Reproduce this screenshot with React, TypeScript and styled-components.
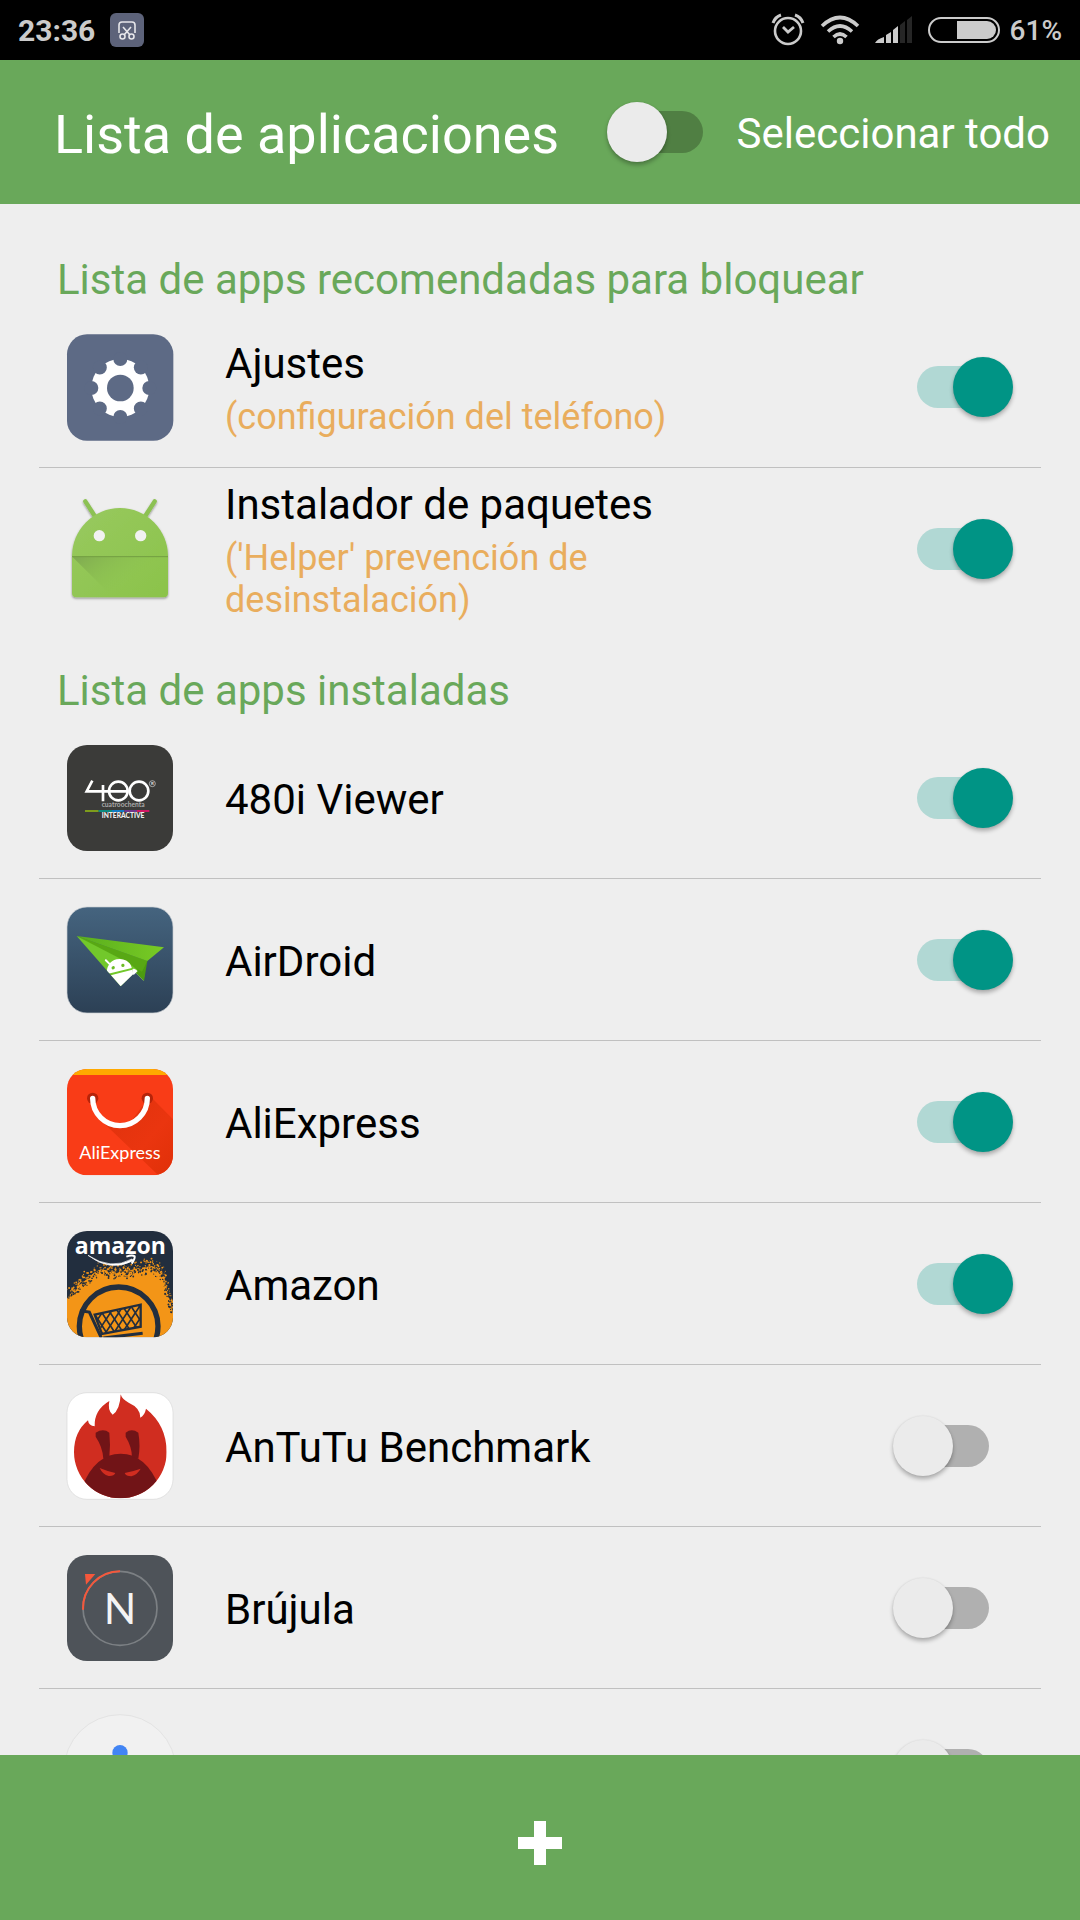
import React, { useState } from 'react';
import styled, { createGlobalStyle } from 'styled-components';

const GlobalStyle = createGlobalStyle`
  * { box-sizing: border-box; }
  body {
    margin: 0;
    background: #eeeeee;
    font-family: Roboto, "Liberation Sans", sans-serif;
    color: #000;
  }
`;

const Screen = styled.div`
  display: flex;
  flex-direction: column;
  height: 100vh;
  overflow: hidden;
`;

const StatusBar = styled.div`
  display: flex;
  align-items: center;
  flex: none;
  height: 60px;
  padding: 0 18px;
  background: #000;
  color: #cbcbcb;
`;

const Clock = styled.time`
  margin-right: 15px;
  font-size: 30px;
  font-weight: 700;
`;

const StatusIcons = styled.div`
  display: flex;
  align-items: center;
  gap: 15px;
  margin-left: auto;
`;

const Battery = styled.div`
  display: flex;
  align-items: center;
  gap: 10px;
  font-size: 28px;
  font-weight: 500;
`;

const Header = styled.header`
  display: flex;
  align-items: center;
  justify-content: space-between;
  flex: none;
  height: 144px;
  padding: 0 30px 0 54px;
  background: #69a85a;
  color: #fff;
`;

const Title = styled.h1`
  margin: 0;
  padding-top: 6px;
  font-size: 54px;
  line-height: 64px;
  font-weight: 400;
`;

const SelectAll = styled.div`
  display: flex;
  align-items: center;
  gap: 10px;
`;

const SelectAllLabel = styled.label`
  padding-top: 4px;
  font-size: 42px;
  line-height: 48px;
  cursor: pointer;
`;

const Switch = styled.input<{ $track?: string }>`
  appearance: none;
  display: grid;
  align-items: center;
  flex: none;
  width: 120px;
  height: 60px;
  margin: 0;
  cursor: pointer;

  &::before,
  &::after {
    content: '';
    grid-area: 1 / 1;
  }
  &::before {
    justify-self: center;
    width: 72px;
    height: 42px;
    border-radius: 21px;
    background: ${(p) => p.$track ?? '#b0b0b0'};
  }
  &::after {
    justify-self: start;
    width: 60px;
    height: 60px;
    border-radius: 50%;
    background: #ebebeb;
    box-shadow: 0 3px 4px rgba(0, 0, 0, 0.28), 0 0 2px rgba(0, 0, 0, 0.08);
  }
  &:checked::before {
    background: #b1d8d4;
  }
  &:checked::after {
    justify-self: end;
    background: #009485;
  }
`;

const Content = styled.main`
  flex: 1;
  min-height: 0;
  padding: 15px 39px 0;
  overflow-y: auto;
  scrollbar-width: none;
`;

const SectionTitle = styled.h2`
  margin: 0;
  padding: 37px 18px 2px;
  font-size: 42px;
  line-height: 48px;
  font-weight: 400;
  color: #69a85a;
`;

const List = styled.ul`
  margin: 0;
  padding: 0;
  list-style: none;
`;

const Row = styled.li`
  display: flex;
  align-items: center;
  height: 162px;
  padding: 0 28px 0 27px;
  border-bottom: 1px solid #c0c0c0;

  &:last-child {
    border-bottom-color: transparent;
  }
`;

const AppIcon = styled.svg`
  flex: none;
  width: 108px;
  height: 108px;
  overflow: visible;
`;

const RowLabel = styled.label`
  flex: 1;
  padding: 4px 180px 0 51px;
  cursor: pointer;
`;

const Name = styled.span`
  display: block;
  font-size: 42px;
  line-height: 50px;
`;

const Note = styled.span`
  display: block;
  padding-top: 7px;
  font-size: 36px;
  line-height: 42px;
  color: #e9ad5d;
`;

const AddButton = styled.button`
  display: flex;
  align-items: center;
  justify-content: center;
  flex: none;
  height: 165px;
  padding: 10px 0 0;
  border: 0;
  background: #69a85a;
  cursor: pointer;
`;

const SettingsIcon = () => (
  <AppIcon viewBox="78 67 324 324" aria-hidden="true">
    <rect x="81" y="71" width="319" height="319" rx="60" fill="#5d6a85" />
    <circle cx="241" cy="232" r="87" fill="#fff" />
    {[0, 45, 90, 135, 180, 225, 270, 315].map((a) => (
      <circle key={a} cx="241" cy="145" r="21" fill="#5d6a85" transform={`rotate(${a} 241 232)`} />
    ))}
    <circle cx="241" cy="232" r="40" fill="#5d6a85" />
  </AppIcon>
);

const InstallerIcon = () => (
  <AppIcon viewBox="78 554 324 324" aria-hidden="true">
    <defs>
      <linearGradient id="droid" x1="0" y1="0" x2="1" y2="1">
        <stop offset="0" stopColor="#98c95f" />
        <stop offset="1" stopColor="#8bc34a" />
      </linearGradient>
      <linearGradient id="droidShade" x1="0" y1="0" x2="1" y2="0.6">
        <stop offset="0" stopColor="#7ea851" />
        <stop offset="0.7" stopColor="#8bc34a" stopOpacity="0" />
      </linearGradient>
      <filter id="droidDrop" x="-10%" y="-10%" width="120%" height="125%">
        <feDropShadow dx="0" dy="4" stdDeviation="3" floodOpacity="0.4" />
      </filter>
    </defs>
    <g filter="url(#droidDrop)">
      <path d="M136 573l32 50M344 573l-32 50" stroke="#8cc152" strokeWidth="13" strokeLinecap="round" />
      <path d="M96 738a144 145 0 0 1 288 0v110q0 13-13 13H109q-13 0-13-13z" fill="url(#droid)" />
    </g>
    <path d="M97 739H383V848q0 13-13 13H220z" fill="url(#droidShade)" />
    <path d="M96 739H384" stroke="#729e42" strokeWidth="3" />
    <circle cx="178" cy="676" r="17" fill="#f1f1f1" />
    <circle cx="302" cy="676" r="17" fill="#f1f1f1" />
  </AppIcon>
);

const ViewerIcon = () => (
  <AppIcon viewBox="48 41 324 324" aria-hidden="true">
    <rect x="51" y="44" width="318" height="318" rx="60" fill="#3b3b39" />
    <g fill="none" stroke="#fff" strokeWidth="8">
      <path d="M127 151L110 183H232M159 164V213" />
      <circle cx="205" cy="182" r="28" />
      <circle cx="267" cy="182" r="28" />
    </g>
    <circle cx="307" cy="160" r="9" fill="none" stroke="#ddd" strokeWidth="2" />
    <text x="307" y="165" textAnchor="middle" fontSize="13" fontWeight="700" fill="#ddd">R</text>
    <text x="155" y="231" fontFamily="Lato, sans-serif" fontSize="20" fontWeight="700" fill="#aaa">cuatroochenta</text>
    <path d="M105 242H146" stroke="#7e9c1c" strokeWidth="6" />
    <path d="M146 242H186" stroke="#0c8a80" strokeWidth="6" />
    <path d="M186 242H223" stroke="#117cc4" strokeWidth="6" />
    <path d="M223 242H261" stroke="#70368c" strokeWidth="6" />
    <path d="M261 242H298" stroke="#d11763" strokeWidth="6" />
    <text x="155" y="262" fontFamily="Lato, sans-serif" fontSize="20" fontWeight="900" fill="#eee">INTERACTIVE</text>
  </AppIcon>
);

const AirDroidIcon = () => (
  <AppIcon viewBox="48 47 324 324" aria-hidden="true">
    <defs>
      <linearGradient id="airBg" x1="0" y1="0" x2="0" y2="1">
        <stop offset="0" stopColor="#45647f" />
        <stop offset="1" stopColor="#2c4055" />
      </linearGradient>
      <linearGradient id="airWing" x1="0" y1="0" x2="1" y2="0">
        <stop offset="0" stopColor="#58ad1d" />
        <stop offset="1" stopColor="#79cb25" />
      </linearGradient>
      <clipPath id="airPaper">
        <path d="M80 137L212 288L268 234L246 200L200 180z" />
      </clipPath>
    </defs>
    <rect x="51" y="50" width="318" height="318" rx="60" fill="url(#airBg)" stroke="#c9cdd1" strokeWidth="2" />
    <path d="M246 236l35 36 3-30-24-10z" fill="#a9b5c4" />
    <path d="M80 137L292 212L282 272L246 236L140 172z" fill="#4c9b10" />
    <path d="M80 137L292 212L276 244L180 192z" fill="#58a814" />
    <path d="M80 137L212 288L262 238L236 218z" fill="#72c82b" />
    <g clipPath="url(#airPaper)">
      <g transform="rotate(-14 208 240)">
        <path d="M170 242a38 36 0 0 1 76 0z" fill="#fff" />
        <path d="M184 214l-8-13" stroke="#fff" strokeWidth="6" strokeLinecap="round" />
        <circle cx="192" cy="228" r="5" fill="#6cbc25" />
        <circle cx="222" cy="228" r="5" fill="#6cbc25" />
        <path d="M168 248h78v60h-78z" fill="#fff" />
      </g>
    </g>
    <path d="M247 238q3-6 11 0l5 4-12 12q-5-6-4-16z" fill="#fff" />
    <path d="M80 137L342 171L292 212z" fill="url(#airWing)" />
  </AppIcon>
);

const AliExpressIcon = () => (
  <AppIcon viewBox="48 53 324 324" aria-hidden="true">
    <defs>
      <clipPath id="aliClip">
        <rect x="51" y="56" width="318" height="319" rx="60" />
      </clipPath>
      <linearGradient id="aliShade" x1="0" y1="0" x2="1" y2="1">
        <stop offset="0.2" stopColor="#e2330e" />
        <stop offset="0.6" stopColor="#ea350f" />
        <stop offset="1" stopColor="#e03008" />
      </linearGradient>
    </defs>
    <g clipPath="url(#aliClip)">
      <path d="M51 56H369V375H51z" fill="#f93c17" />
      <path d="M300 137L369 207V375H325L165 222L230 230z" fill="url(#aliShade)" />
      <path d="M51 56H369V74H51z" fill="#ffa900" />
    </g>
    <circle cx="128" cy="144" r="17" fill="#b6240a" />
    <circle cx="292" cy="144" r="17" fill="#b6240a" />
    <path d="M128 144a82 82 0 0 0 164 0" fill="none" stroke="#fff" strokeWidth="16" strokeLinecap="round" />
    <text x="210" y="327" textAnchor="middle" fontFamily="Lato, sans-serif" fontSize="54" fill="#fff">AliExpress</text>
  </AppIcon>
);

const sprayEdge: Array<[number, number]> = [
  [51, 250], [72, 222], [92, 206], [112, 190], [132, 172], [152, 162], [178, 166], [204, 170],
  [230, 168], [256, 160], [282, 156], [306, 152], [326, 162], [342, 180], [346, 204], [354, 232], [362, 262], [369, 290],
];

const noise = (n: number) => {
  const v = Math.sin(n * 127.1 + 11.7) * 43758.5453;
  return v - Math.floor(v);
};

const sprayDots = Array.from({ length: 460 }, (_, i) => {
  const t = noise(i * 5 + 1) * (sprayEdge.length - 1.01);
  const k = Math.floor(t);
  const f = t - k;
  const [ax, ay] = sprayEdge[k];
  const [bx, by] = sprayEdge[k + 1];
  const spread = noise(i * 5 + 2) + noise(i * 5 + 3) - 1;
  return {
    x: ax + (bx - ax) * f + noise(i * 5 + 4) * 12 - 6,
    y: ay + (by - ay) * f + spread * 26,
    r: 1 + noise(i * 5 + 5) * 2,
    dark: spread > 0,
  };
});

const AmazonIcon = () => (
  <AppIcon viewBox="48 44 324 324" aria-hidden="true">
    <defs>
      <clipPath id="amzClip">
        <rect x="51" y="47" width="318" height="319" rx="60" />
      </clipPath>
      <clipPath id="basketClip">
        <path d="M134 298L272 268V334L160 354z" />
      </clipPath>
    </defs>
    <g clipPath="url(#amzClip)">
      <path d="M51 47H369V366H51z" fill="#222e3e" />
      <path d={`M51 366L${sprayEdge.map((p) => p.join(' ')).join('L')}V366z`} fill="#f39517" />
      {sprayDots.map((d, i) => (
        <circle key={i} cx={d.x} cy={d.y} r={d.r} fill={d.dark ? '#222e3e' : '#f39517'} />
      ))}
      <g fill="none" stroke="#222e3e">
        <circle cx="206" cy="333" r="118" strokeWidth="16" />
        <path d="M90 286l28 4 36 78" strokeWidth="9" />
        <path d="M134 298L272 268V334L156 356z" strokeWidth="7" />
        <path d="M160 368L278 354" strokeWidth="9" />
        <g clipPath="url(#basketClip)" strokeWidth="5">
          {[0, 1, 2, 3, 4, 5, 6, 7, 8].map((n) => (
            <path key={n} d={`M${86 + n * 25} 262l72 110M${126 + n * 25} 262l-72 110`} />
          ))}
        </g>
      </g>
    </g>
    <text x="211" y="115" textAnchor="middle" fontFamily="'Open Sans', sans-serif" fontSize="69" fontWeight="700" fill="#fff">amazon</text>
    <path d="M114 120Q182 166 246 131L250 136Q180 172 114 120z" fill="#fff" stroke="#fff" strokeWidth="2" />
    <path d="M229 124q18-6 25-1 1 8-9 22" fill="none" stroke="#fff" strokeWidth="6" />
  </AppIcon>
);

const AntutuIcon = () => (
  <AppIcon viewBox="48 50 324 324" aria-hidden="true">
    <defs>
      <clipPath id="flame">
        <path d="M212 57Q216 72 236 82Q272 98 271 127Q284 120 288 100Q350 150 350 230A139 139 0 0 1 72 230Q72 170 114 135Q116 152 134 153Q132 104 178 77Q172 106 188 118Q210 104 212 57z" />
      </clipPath>
    </defs>
    <rect x="51" y="52" width="318" height="320" rx="60" fill="#fff" stroke="#d8d8d8" strokeWidth="2" />
    <g clipPath="url(#flame)">
      <path d="M60 50H360V380H60z" fill="#d02d20" />
      <path d="M96 335Q136 235 212 235Q288 235 328 335L300 380H120z" fill="#711417" />
    </g>
    <path d="M137 172Q160 158 178 172Q182 210 178 244L160 250Q158 215 137 184zM227 172Q245 158 265 172Q272 210 265 250L246 246Q246 215 227 184z" fill="#711417" />
    <path d="M149 278Q172 288 196 293Q192 303 176 302Q158 298 149 278zM272 280Q250 288 224 293Q228 303 244 303Q262 298 272 280z" fill="#d02d20" />
  </AppIcon>
);

const CompassIcon = () => (
  <AppIcon viewBox="48 41 324 324" aria-hidden="true">
    <rect x="51" y="44" width="318" height="318" rx="60" fill="#4e5359" />
    <circle cx="210" cy="204" r="111" fill="none" stroke="#7c8084" strokeWidth="5" />
    <path d="M99 208A111 111 0 0 1 210 93" fill="none" stroke="#f5573b" strokeWidth="6" />
    <path d="M105 101H136L108 133z" fill="#f5573b" />
    <text x="210" y="251" textAnchor="middle" fontFamily="Lato, sans-serif" fontSize="128" fill="#f4f4f4">N</text>
  </AppIcon>
);

const AssistantIcon = () => (
  <AppIcon viewBox="48 527 324 324" aria-hidden="true">
    <circle cx="210" cy="691" r="168" fill="#f1f1f1" stroke="#e3e3e3" strokeWidth="3" />
    <circle cx="210" cy="637" r="23" fill="#4285f4" />
  </AppIcon>
);

interface AppEntry {
  id: string;
  name?: string;
  note?: string;
  icon: React.FC;
  on: boolean;
}

const recommended: AppEntry[] = [
  { id: 'settings', name: 'Ajustes', note: '(configuración del teléfono)', icon: SettingsIcon, on: true },
  { id: 'installer', name: 'Instalador de paquetes', note: "('Helper' prevención de desinstalación)", icon: InstallerIcon, on: true },
];

const installed: AppEntry[] = [
  { id: 'viewer', name: '480i Viewer', icon: ViewerIcon, on: true },
  { id: 'airdroid', name: 'AirDroid', icon: AirDroidIcon, on: true },
  { id: 'aliexpress', name: 'AliExpress', icon: AliExpressIcon, on: true },
  { id: 'amazon', name: 'Amazon', icon: AmazonIcon, on: true },
  { id: 'antutu', name: 'AnTuTu Benchmark', icon: AntutuIcon, on: false },
  { id: 'compass', name: 'Brújula', icon: CompassIcon, on: false },
  { id: 'next', icon: AssistantIcon, on: false },
];

const everyApp = [...recommended, ...installed];

export default function App() {
  const [state, setState] = useState<Record<string, boolean>>(
    Object.fromEntries(everyApp.map((a) => [a.id, a.on])),
  );
  const allOn = everyApp.every((a) => state[a.id]);

  const renderRow = ({ id, name, note, icon: Icon }: AppEntry) => (
    <Row key={id}>
      <Icon />
      <RowLabel htmlFor={id}>
        {name && <Name>{name}</Name>}
        {note && <Note>{note}</Note>}
      </RowLabel>
      <Switch
        type="checkbox"
        id={id}
        aria-label={name ? undefined : 'App'}
        checked={state[id]}
        onChange={(e) => setState({ ...state, [id]: e.target.checked })}
      />
    </Row>
  );

  return (
    <Screen>
      <GlobalStyle />
      <StatusBar>
        <Clock>23:36</Clock>
        <svg width="34" height="34" viewBox="0 0 34 34" fill="none" stroke="#e6e6ea" strokeWidth="1.6" aria-hidden="true">
          <rect width="34" height="34" rx="6" fill="#5d637a" stroke="none" />
          <path d="M9 20V12q0-3 3-3h10q3 0 3 3v8M13 14l7 8M21 14l-7 8" />
          <circle cx="12.5" cy="23.5" r="2.5" />
          <circle cx="21.5" cy="23.5" r="2.5" />
        </svg>
        <StatusIcons>
          <svg width="34" height="34" viewBox="0 0 34 34" fill="none" stroke="#cbcbcb" aria-hidden="true">
            <circle cx="17" cy="18" r="13" strokeWidth="2.6" />
            <path d="M12 14l5 5 6-5" strokeWidth="2.8" />
            <path d="M2 10q2-6 8-8M32 10q-2-6-8-8" strokeWidth="3" />
          </svg>
          <svg width="40" height="34" viewBox="0 0 40 34" fill="none" stroke="#cbcbcb" strokeWidth="3.6" aria-hidden="true">
            <path d="M2 13q18-17 36 0M8 18.5q12-11 24 0M13.5 24q6.5-6 13 0" />
            <circle cx="20" cy="28" r="3.2" fill="#cbcbcb" stroke="none" />
          </svg>
          <svg width="38" height="28" viewBox="0 0 38 28" fill="#cbcbcb" aria-hidden="true">
            <path d="M0 27q2-4 9-6v6zM11 19l5-3v11h-5zM18 14l5-4v17h-5z" />
            <path d="M25 9l5-4v22h-5zM32 4l5-4v27h-5z" fill="#262626" />
          </svg>
          <Battery>
            <svg width="72" height="28" viewBox="0 0 72 28" aria-hidden="true">
              <rect x="1" y="2" width="70" height="24" rx="12" fill="none" stroke="#cbcbcb" strokeWidth="2" />
              <path d="M29 5H59a9 9 0 0 1 0 18H29z" fill="#cbcbcb" />
            </svg>
            <span>61%</span>
          </Battery>
        </StatusIcons>
      </StatusBar>
      <Header>
        <Title>Lista de aplicaciones</Title>
        <SelectAll>
          <Switch
            type="checkbox"
            id="all"
            $track="#507f43"
            checked={allOn}
            onChange={(e) => setState(Object.fromEntries(everyApp.map((a) => [a.id, e.target.checked])))}
          />
          <SelectAllLabel htmlFor="all">Seleccionar todo</SelectAllLabel>
        </SelectAll>
      </Header>
      <Content>
        <section>
          <SectionTitle>Lista de apps recomendadas para bloquear</SectionTitle>
          <List>{recommended.map(renderRow)}</List>
        </section>
        <section>
          <SectionTitle>Lista de apps instaladas</SectionTitle>
          <List>{installed.map(renderRow)}</List>
        </section>
      </Content>
      <AddButton type="button" aria-label="Añadir">
        <svg width="44" height="44" viewBox="0 0 44 44" aria-hidden="true">
          <path d="M16 0h12v16h16v12H28v16H16V28H0V16h16z" fill="#fff" />
        </svg>
      </AddButton>
    </Screen>
  );
}
